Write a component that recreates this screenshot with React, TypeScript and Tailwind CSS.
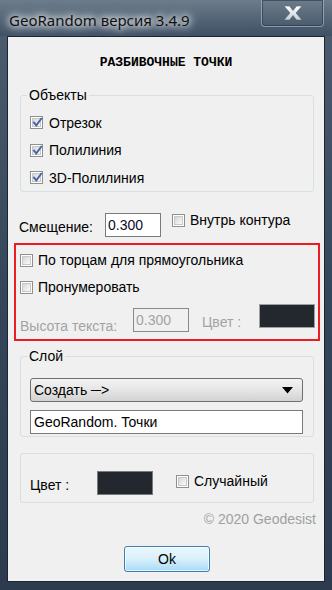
import React from 'react';

const ui = "font-['Liberation_Sans',Arial,sans-serif]";

function CheckBox({ checked = false }: { checked?: boolean }) {
  return (
    <span className="relative w-[13px] h-[13px] shrink-0 border border-[#8e8f8f] bg-white p-[1px]">
      <span className="block w-full h-full border border-[#c6c8ca] bg-gradient-to-br from-[#d6d7d9] to-[#fafafa]" />
      {checked && (
        <svg className="absolute left-[1px] top-[0px]" width="11" height="11" viewBox="0 0 11 11">
          <path d="M2 5.6 L4.3 8.4 L9.2 1.8" fill="none" stroke="#4a62a6" strokeWidth="1.9" strokeLinecap="square" />
        </svg>
      )}
    </span>
  );
}

function Group({ label, className, children }: { label?: string; className: string; children: React.ReactNode }) {
  return (
    <div className={`relative ml-[12px] w-[294px] rounded-[3px] border border-[#d5dfe5] ${className}`}>
      {label && (
        <span className="absolute left-[6px] top-[-10px] bg-[#f0f0f0] px-[2px] text-[14px] leading-[18px] text-black">
          {label}
        </span>
      )}
      {children}
    </div>
  );
}

export default function App() {
  return (
    <div className={`relative w-[332px] h-[590px] flex flex-col overflow-hidden bg-gradient-to-b from-[#4d5e6f] via-[#34465a] to-[#2c3c4e] ${ui}`}>
      <div className="h-[36px] flex items-start justify-between pl-[9px] pr-[8px] bg-gradient-to-b from-[#6c7c8b] to-[#3e5064]">
        <span className="mt-[10px] font-['Noto_Sans',sans-serif] text-[15px] leading-[20px] text-[#111] [text-shadow:0_0_6px_#fff,0_0_10px_#fff,0_0_14px_rgba(255,255,255,0.8)]">
          GeoRandom версия 3.4.9
        </span>
        <div className="w-[63px] h-[27px] flex items-center justify-center rounded-b-[4px] border border-t-0 border-[#a9b4bf]/70 shadow-[inset_0_0_0_1px_rgba(40,55,70,0.6)]">
          <svg width="22" height="16" viewBox="0 0 22 16">
            <defs>
              <linearGradient id="xg" x1="0" y1="0" x2="0" y2="1">
                <stop offset="0" stopColor="#ffffff" />
                <stop offset="1" stopColor="#c9cfd5" />
              </linearGradient>
            </defs>
            <path d="M2 1 H7.5 L11 5.6 L14.5 1 H20 L14 8 L20 15 H14.5 L11 10.4 L7.5 15 H2 L8 8 Z" fill="url(#xg)" stroke="#5a6470" strokeWidth="0.6" />
          </svg>
        </div>
      </div>

      <div className="mx-[7px] mb-[8px] flex-1 flex flex-col border border-[#1b2632] bg-[#f0f0f0] text-[14px] text-black">
        <div className="mt-[18px] h-[16px] text-center font-['Liberation_Mono',monospace] font-bold text-[13px] leading-[16px]">
          РАЗБИВОЧНЫЕ ТОЧКИ
        </div>

        <Group label="Объекты" className="mt-[24px] h-[97px] pt-[13px] pl-[9px]">
          {['Отрезок', 'Полилиния', '3D-Полилиния'].map((t) => (
            <div key={t} className="h-[27.5px] flex items-center gap-[6px]">
              <CheckBox checked />
              <span className="leading-[18px]">{t}</span>
            </div>
          ))}
        </Group>

        <div className="mt-[21px] h-[24px] flex items-center pl-[11px]">
          <span className="w-[86px] pt-[4px]">Смещение:</span>
          <div className="w-[56px] h-[24px] border border-[#7a7a7a] bg-white pl-[2px] leading-[22px] text-[#0a0a28]">0.300</div>
          <div className="ml-[11px] self-start flex items-center gap-[5px] h-[14px]">
            <CheckBox />
            <span className="leading-[18px] mt-[-1px]">Внутрь контура</span>
          </div>
        </div>

        <div className="mt-[6px] ml-[6px] w-[306px] h-[98px] border-2 border-[#ed1c24] pl-[4px] flex flex-col">
          <div className="mt-[8px] h-[14px] flex items-center gap-[5px]">
            <CheckBox />
            <span className="leading-[18px]">По торцам для прямоугольника</span>
          </div>
          <div className="mt-[13px] h-[14px] flex items-center gap-[5px]">
            <CheckBox />
            <span className="leading-[18px]">Пронумеровать</span>
          </div>
          <div className="mt-[10px] flex items-start">
            <span className="w-[113px] mt-[13px] leading-[18px] text-[#a3a3a3]">Высота текста:</span>
            <div className="mt-[4px] w-[56px] h-[24px] border border-[#8a8a8a] pl-[2px] leading-[22px] text-[#a3a3a3]">0.300</div>
            <span className="ml-[13px] mt-[9px] w-[57px] leading-[18px] text-[#a3a3a3]">Цвет :</span>
            <div className="w-[56px] h-[24px] border border-[#a0a0a0] bg-[#22282e]" />
          </div>
        </div>

        <Group label="Слой" className="mt-[15px] h-[81px] pl-[9px] pt-[21px]">
          <div className="w-[273px] h-[24px] flex items-center justify-between rounded-[3px] border border-[#707070] bg-gradient-to-b from-[#f3f3f3] via-[#e6e6e6] to-[#d2d2d2] pl-[3px] pr-[9px]">
            <span className="leading-[18px]">Создать ─&gt;</span>
            <svg width="11" height="7" viewBox="0 0 11 7">
              <path d="M0 0 H11 L5.5 6.5 Z" fill="#000" />
            </svg>
          </div>
          <div className="mt-[8px] w-[273px] h-[24px] border border-[#7a7a7a] bg-white pl-[3px] leading-[22px]">
            GeoRandom. Точки
          </div>
        </Group>

        <Group className="mt-[16px] h-[50px] pl-[9px] pt-[17px] flex items-start">
          <span className="w-[67px] mt-[5px] leading-[18px]">Цвет :</span>
          <div className="w-[56px] h-[24px] border border-[#7a7a7a] bg-[#22282e]" />
          <div className="ml-[23px] mt-[3px] h-[14px] flex items-center gap-[5px]">
            <CheckBox />
            <span className="leading-[18px]">Случайный</span>
          </div>
        </Group>

        <div className="mt-[7px] pr-[8px] text-right leading-[18px] text-[#a0a0a0]">© 2020 Geodesist</div>

        <div className="mt-[18px] ml-[116px] w-[86px] h-[26px] rounded-[3px] border border-[#3c7fb1] bg-gradient-to-b from-[#eaf6fd] via-[#d9f0fc] to-[#a7d9f5] shadow-[inset_0_0_0_1px_rgba(255,255,255,0.7)] flex items-center justify-center leading-[18px]">
          Ok
        </div>
      </div>
    </div>
  );
}
